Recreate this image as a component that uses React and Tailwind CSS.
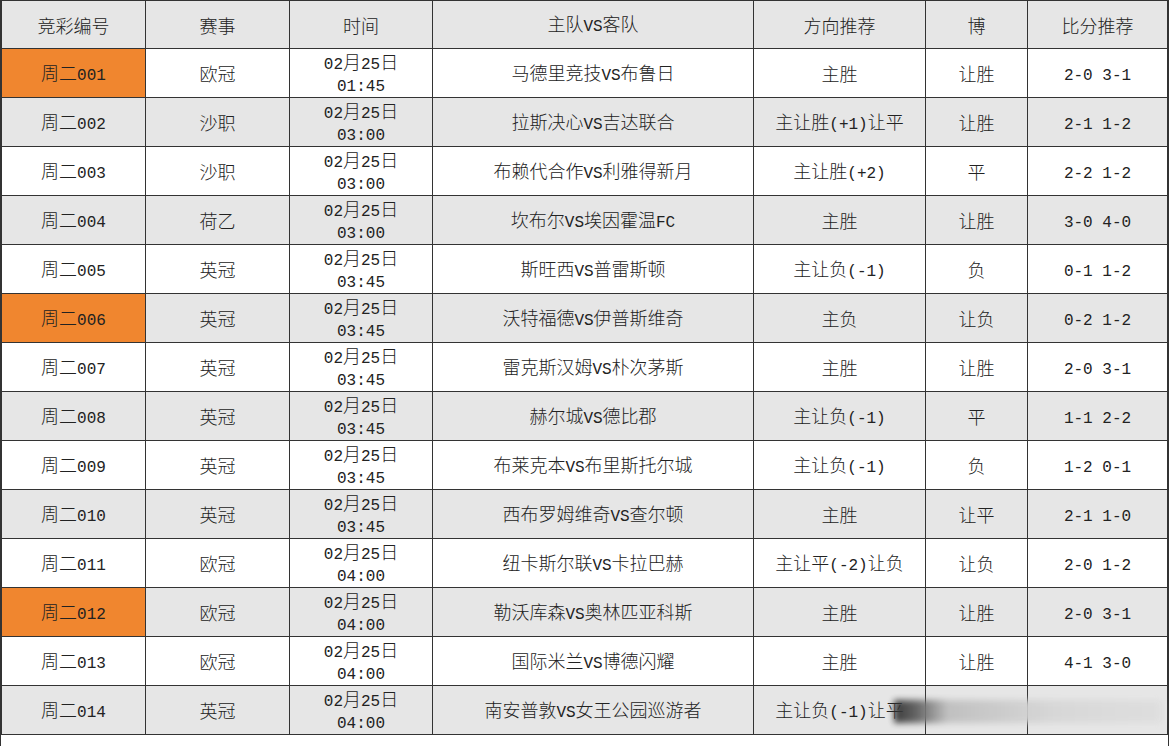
import React from "react";

const rows = [
  ["周二001", "欧冠", "01:45", "马德里竞技VS布鲁日", "主胜", "让胜", "2-0 3-1", true],
  ["周二002", "沙职", "03:00", "拉斯决心VS吉达联合", "主让胜(+1)让平", "让胜", "2-1 1-2", false],
  ["周二003", "沙职", "03:00", "布赖代合作VS利雅得新月", "主让胜(+2)", "平", "2-2 1-2", false],
  ["周二004", "荷乙", "03:00", "坎布尔VS埃因霍温FC", "主胜", "让胜", "3-0 4-0", false],
  ["周二005", "英冠", "03:45", "斯旺西VS普雷斯顿", "主让负(-1)", "负", "0-1 1-2", false],
  ["周二006", "英冠", "03:45", "沃特福德VS伊普斯维奇", "主负", "让负", "0-2 1-2", true],
  ["周二007", "英冠", "03:45", "雷克斯汉姆VS朴次茅斯", "主胜", "让胜", "2-0 3-1", false],
  ["周二008", "英冠", "03:45", "赫尔城VS德比郡", "主让负(-1)", "平", "1-1 2-2", false],
  ["周二009", "英冠", "03:45", "布莱克本VS布里斯托尔城", "主让负(-1)", "负", "1-2 0-1", false],
  ["周二010", "英冠", "03:45", "西布罗姆维奇VS查尔顿", "主胜", "让平", "2-1 1-0", false],
  ["周二011", "欧冠", "04:00", "纽卡斯尔联VS卡拉巴赫", "主让平(-2)让负", "让负", "2-0 1-2", false],
  ["周二012", "欧冠", "04:00", "勒沃库森VS奥林匹亚科斯", "主胜", "让胜", "2-0 3-1", true],
  ["周二013", "欧冠", "04:00", "国际米兰VS博德闪耀", "主胜", "让胜", "4-1 3-0", false],
  ["周二014", "英冠", "04:00", "南安普敦VS女王公园巡游者", "主让负(-1)让平", "", "", false],
];

const headers = ["竞彩编号", "赛事", "时间", "主队VS客队", "方向推荐", "博", "比分推荐"];

function T({ s }) {
  const parts = s.split(/([\x20-\x7E]+)/).filter((p) => p.length > 0);
  return (
    <>
      {parts.map((p, i) =>
        /^[\x20-\x7E]+$/.test(p) ? (
          <span
            key={i}
            className="text-[16px] leading-[16px] whitespace-pre font-normal"
            style={{ fontFamily: '"Liberation Mono", monospace' }}
          >
            {p}
          </span>
        ) : (
          <span key={i} className="leading-[18px]">
            {p}
          </span>
        )
      )}
    </>
  );
}

const cell = "border border-[#333] text-center align-middle p-0";

function Line({ s, h }) {
  return (
    <div className={"flex items-center justify-center overflow-visible whitespace-nowrap " + h}>
      <div className="leading-[18px]">
        <T s={s} />
      </div>
    </div>
  );
}

export default function App() {
  return (
    <div
      className="w-[1170px] h-[746px] bg-white text-[#222] overflow-hidden"
      style={{ fontFamily: '"Noto Sans CJK SC", "Noto Sans", sans-serif' }}
    >
      <div className="relative w-[1169px] h-[746px] border-l border-r border-[#333]">
        <table className="w-full table-fixed border-collapse text-[18px] font-light leading-[18px]">
          <colgroup>
            <col className="w-[144px]" />
            <col className="w-[144px]" />
            <col className="w-[143px]" />
            <col className="w-[321px]" />
            <col className="w-[172px]" />
            <col className="w-[102px]" />
            <col />
          </colgroup>
          <thead>
            <tr className="h-[48px] bg-[#e6e6e6]">
              {headers.map((h, i) => (
                <th key={i} className={cell + " font-light"}>
                  <Line s={h} h="h-[46px]" />
                </th>
              ))}
            </tr>
          </thead>
          <tbody>
            {rows.map((r, idx) => (
              <tr
                key={idx}
                className={"h-[49px] " + (idx % 2 === 1 ? "bg-[#e6e6e6]" : "bg-white")}
              >
                <td className={cell + (r[7] ? " bg-[#f0862f]" : "")}>
                  <Line s={r[0]} h="h-[47px]" />
                </td>
                <td className={cell}>
                  <Line s={r[1]} h="h-[47px]" />
                </td>
                <td className={cell}>
                  <div className="flex flex-col items-center justify-center h-[47px]">
                    <Line s="02月25日" h="h-[22px]" />
                    <Line s={r[2]} h="h-[22px]" />
                  </div>
                </td>
                <td className={cell}>
                  <Line s={r[3]} h="h-[47px]" />
                </td>
                <td className={cell}>
                  <Line s={r[4]} h="h-[47px]" />
                </td>
                <td className={cell}>
                  <Line s={r[5]} h="h-[47px]" />
                </td>
                <td className={cell}>
                  <Line s={r[6]} h="h-[47px]" />
                </td>
              </tr>
            ))}
          </tbody>
        </table>
        <div className="absolute left-[893px] top-[700px] w-[268px] h-[23px] blur-[3px] bg-[linear-gradient(to_right,#2a2a2a_0%,#555_8%,#bdbdbd_20%,#d6d6d6_60%,#dedede_100%)] opacity-90"></div>
      </div>
    </div>
  );
}
